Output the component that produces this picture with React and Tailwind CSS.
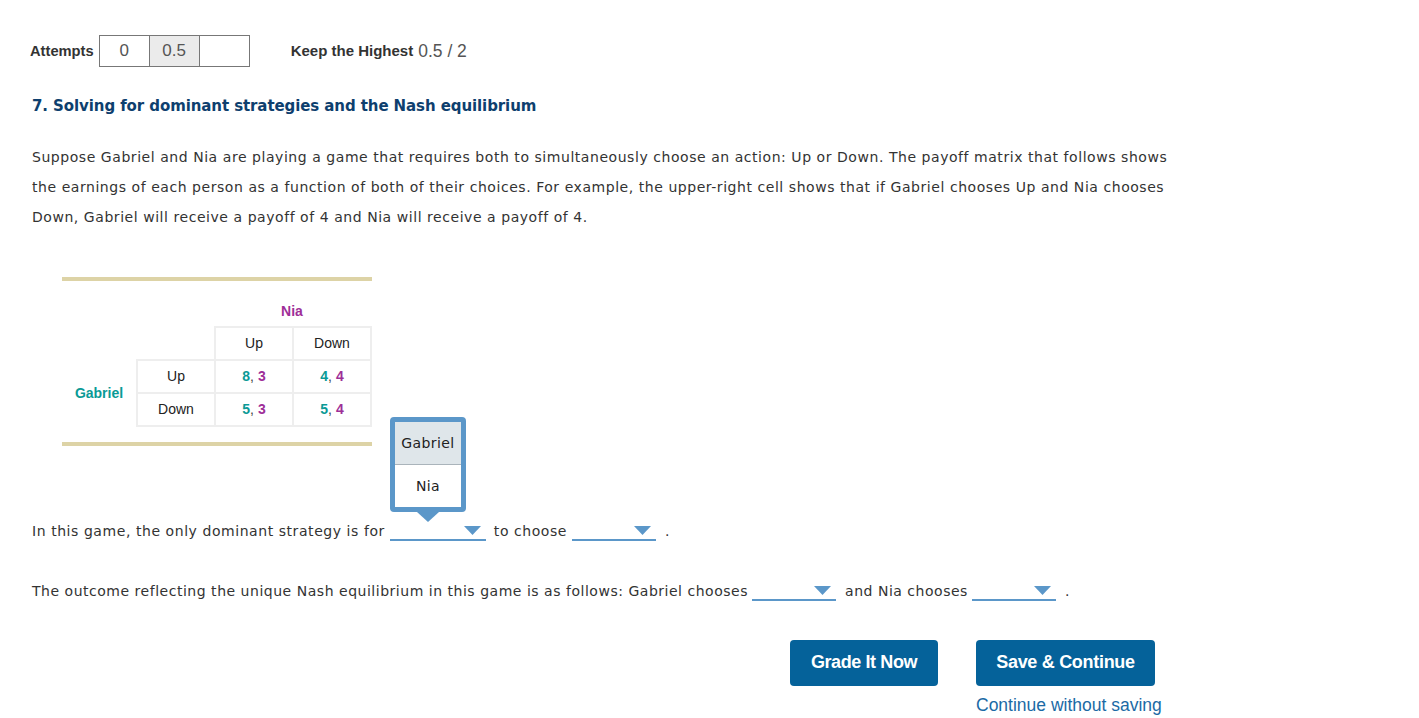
import React from "react";

function Caret() {
  return (
    <svg width="17" height="9" viewBox="0 0 17 9" className="block">
      <polygon points="0,0 17,0 8.5,9" fill="#5b97c9" />
    </svg>
  );
}

function Select({ w }) {
  return (
    <div
      className={`relative h-[20px] border-b-2 border-[#5b97c9] flex items-center justify-end pr-[5px] ${w}`}
    >
      <Caret />
    </div>
  );
}

export default function App() {
  const cell = "border-2 border-[#eeeeee] h-[33px] w-[78px] text-center p-0";
  return (
    <div className="relative w-[1419px] h-[718px] bg-white overflow-hidden font-['DejaVu_Sans',Verdana,sans-serif] text-[#333]">
      {/* Attempts row */}
      <div className="flex items-center pl-[30px] pt-[35px] h-[67px] font-['Liberation_Sans',Arial,sans-serif]">
        <span className="text-[14.7px] font-bold text-[#333] mr-[5px]">Attempts</span>
        <div className="flex">
          <div className="w-[51px] h-[32px] border border-[#777] flex items-center justify-center text-[17px] text-[#555]">0</div>
          <div className="w-[51px] h-[32px] -ml-px border border-[#777] bg-[#ebebeb] flex items-center justify-center text-[17px] text-[#555]">0.5</div>
          <div className="w-[51px] h-[32px] -ml-px border border-[#777]"></div>
        </div>
        <span className="ml-[41px] text-[15px] font-bold text-[#333]">Keep the Highest</span>
        <span className="ml-[5px] text-[17.5px] text-[#555]">0.5 / 2</span>
      </div>

      <div className="px-[32px]">
        <h2 className="mt-[29px] h-[20px] leading-[20px] text-[15px] font-bold tracking-[-0.09px] text-[#0e3f6e]">
          7. Solving for dominant strategies and the Nash equilibrium
        </h2>

        <p className="mt-[26px] text-[14px] tracking-[0.55px] leading-[30px] text-[#333] whitespace-nowrap">
          Suppose Gabriel and Nia are playing a game that requires both to simultaneously choose an action: Up or Down. The payoff matrix that follows shows
          <br />
          the earnings of each person as a function of both of their choices. For example, the upper-right cell shows that if Gabriel chooses Up and Nia chooses
          <br />
          Down, Gabriel will receive a payoff of 4 and Nia will receive a payoff of 4.
        </p>

        {/* Payoff matrix */}
        <div className="ml-[30px] mt-[45px] w-[310px] font-['Liberation_Sans',Arial,sans-serif]">
          <div className="h-[4px] bg-[#ddd3a6]"></div>
          <div className="mt-[20px] h-[20px] flex items-center pl-[152px]">
            <span className="w-[156px] text-center text-[14px] font-bold text-[#9e2f98]">Nia</span>
          </div>
          <table className="mt-[5px] border-collapse text-[14px] text-[#222]">
            <tbody>
              <tr>
                <td className="w-[75px] p-0"></td>
                <td className="w-[77px] p-0"></td>
                <td className={cell}>Up</td>
                <td className={cell}>Down</td>
              </tr>
              <tr>
                <td rowSpan={2} className="w-[75px] p-0 text-center font-bold text-[#0a9a96]">Gabriel</td>
                <td className={cell}>Up</td>
                <td className={cell + " font-bold"}>
                  <span className="text-[#0a9a96]">8</span><span className="font-normal text-[#444]">, </span><span className="text-[#9e2f98]">3</span>
                </td>
                <td className={cell + " font-bold"}>
                  <span className="text-[#0a9a96]">4</span><span className="font-normal text-[#444]">, </span><span className="text-[#9e2f98]">4</span>
                </td>
              </tr>
              <tr>
                <td className={cell}>Down</td>
                <td className={cell + " font-bold"}>
                  <span className="text-[#0a9a96]">5</span><span className="font-normal text-[#444]">, </span><span className="text-[#9e2f98]">3</span>
                </td>
                <td className={cell + " font-bold"}>
                  <span className="text-[#0a9a96]">5</span><span className="font-normal text-[#444]">, </span><span className="text-[#9e2f98]">4</span>
                </td>
              </tr>
            </tbody>
          </table>
          <div className="mt-[15px] h-[4px] bg-[#ddd3a6]"></div>
        </div>

        {/* Sentence 1 */}
        <div className="mt-[75px] h-[20px] flex items-center text-[14px] tracking-[0.56px] whitespace-nowrap">
          <span>In this game, the only dominant strategy is for</span>
          <div className="ml-[5px]"><Select w="w-[96px]" /></div>
          <span className="ml-[8px]">to choose</span>
          <div className="ml-[5px]"><Select w="w-[84px]" /></div>
          <span className="ml-[9px]">.</span>
        </div>

        {/* Sentence 2 */}
        <div className="mt-[40px] h-[20px] flex items-center text-[14px] tracking-[0.52px] whitespace-nowrap">
          <span>The outcome reflecting the unique Nash equilibrium in this game is as follows: Gabriel chooses</span>
          <div className="ml-[4px]"><Select w="w-[84px]" /></div>
          <span className="ml-[9px]">and Nia chooses</span>
          <div className="ml-[4px]"><Select w="w-[84px]" /></div>
          <span className="ml-[9px]">.</span>
        </div>

        {/* Buttons */}
        <div className="mt-[39px] ml-[758px] flex items-start gap-[38px] font-['Liberation_Sans',Arial,sans-serif]">
          <button className="w-[148px] h-[46px] pb-[2px] rounded-[4px] bg-[#05629a] text-white text-[18px] font-bold tracking-[-0.4px]">
            Grade It Now
          </button>
          <div className="flex flex-col items-start">
            <button className="w-[179px] h-[46px] pb-[2px] rounded-[4px] bg-[#05629a] text-white text-[18px] font-bold tracking-[-0.3px]">
              Save &amp; Continue
            </button>
            <span className="mt-[9px] h-[20px] leading-[20px] text-[17.5px] text-[#1b6aa5]">Continue without saving</span>
          </div>
        </div>
      </div>

      {/* Open dropdown popup */}
      <div className="absolute left-[390px] top-[417px] w-[76px]">
        <div className="border-[5px] border-[#5b97c9] rounded-[4px] bg-white overflow-hidden text-[14px] tracking-[0.4px] text-[#222]">
          <div className="h-[43px] bg-[#dfe6ea] flex items-center justify-center border-b border-[#aab4bb]">Gabriel</div>
          <div className="h-[42px] bg-white flex items-center justify-center">Nia</div>
        </div>
        <div className="flex justify-center">
          <svg width="22" height="10" viewBox="0 0 22 10" className="block">
            <polygon points="0,0 22,0 11,10" fill="#5b97c9" />
          </svg>
        </div>
      </div>
    </div>
  );
}
